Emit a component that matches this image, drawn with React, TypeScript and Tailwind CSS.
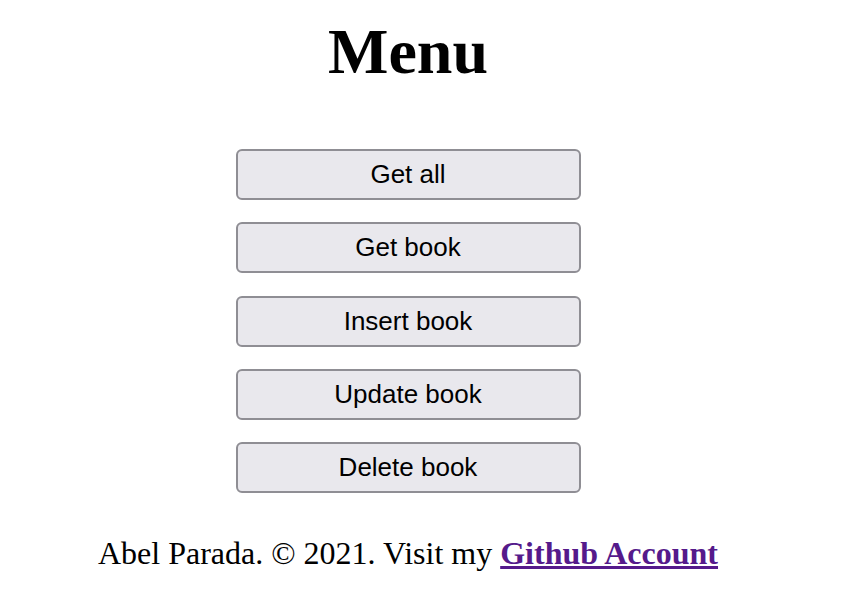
import React from 'react'

const actions = ['Get all', 'Get book', 'Insert book', 'Update book', 'Delete book']

const MenuButton = ({ label }: { label: string }) => (
  <button
    className="w-[345px] h-[51px] rounded-[6px] border-2 border-[#8f8e94] bg-[#e9e8ed] text-[26px] text-black"
    style={{ fontFamily: '"Liberation Sans", Arial, sans-serif' }}
  >
    {label}
  </button>
)

export default function App() {
  return (
    <div className="w-[816px] bg-white text-black" style={{ fontFamily: '"Liberation Serif", "Times New Roman", serif' }}>
      <h1 className="pt-[15px] text-center text-[64px] font-bold leading-[74px]">Menu</h1>

      {/* BUTTONS */}
      <div className="mt-[60px] flex flex-col items-center gap-[22.3px]">
        {actions.map((a) => (
          <MenuButton key={a} label={a} />
        ))}
      </div>

      <p className="mt-[42px] text-center text-[32px] leading-[37px]">
        Abel Parada. © 2021. Visit my{' '}
        <a href="#" className="font-bold text-[#551a8b] underline">
          Github Account
        </a>
      </p>
    </div>
  )
}
